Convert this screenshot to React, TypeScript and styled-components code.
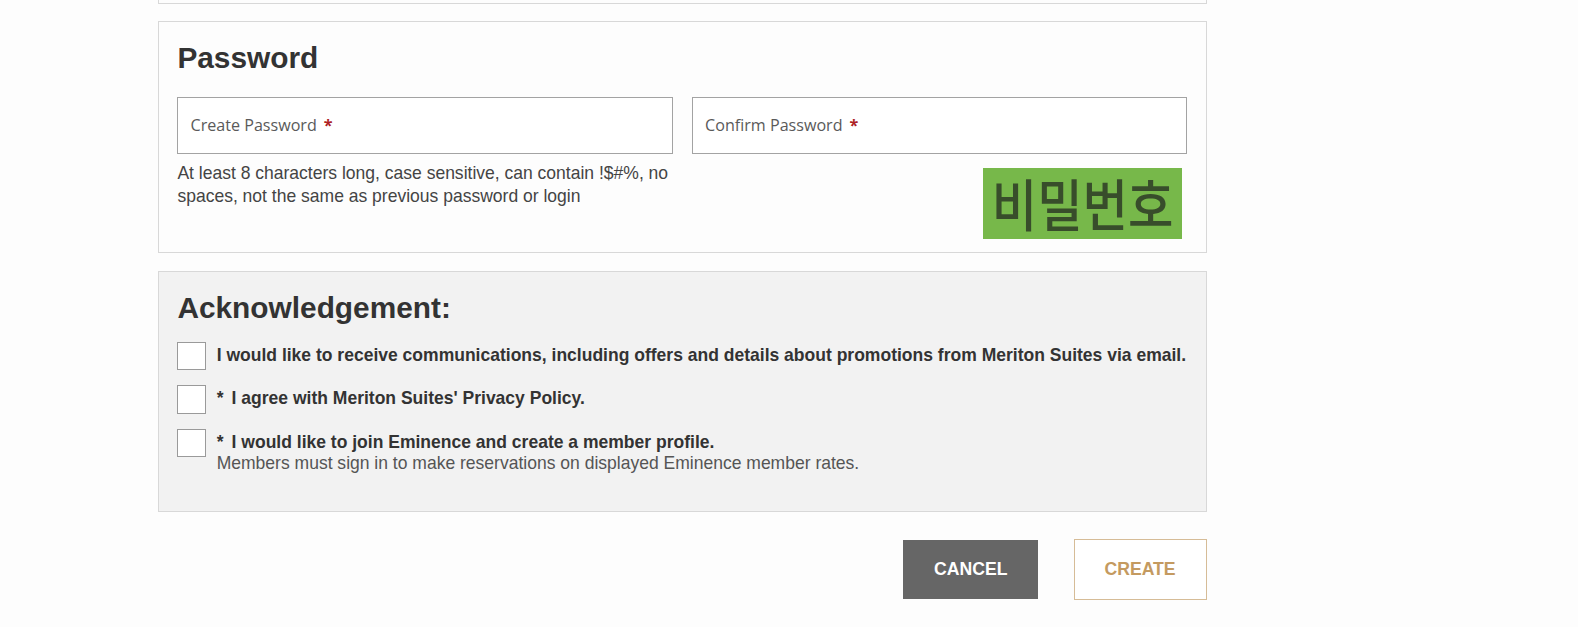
import React from "react"
import styled, { createGlobalStyle } from "styled-components"

const GlobalStyle = createGlobalStyle`
  html, body {
    margin: 0;
    padding: 0;
    background: #fdfdfd;
    font-family: "Liberation Sans", Arial, sans-serif;
    color: #333;
  }
`

const Page = styled.div`
  zoom: 1.008;
  width: 1040px;
  margin-left: 157px;
  display: flex;
  flex-direction: column;
  gap: 17.5px;
  font-size: 17.4px;
`

const Card = styled.section<{ $muted?: boolean }>`
  box-sizing: border-box;
  border: 1px solid #d8d8d8;
  background: ${(p) => (p.$muted ? "#f2f2f2" : "#fdfdfd")};
  padding: 18px 18px 0 18px;
`

const PrevCardEdge = styled.div`
  height: 3.5px;
  border: 1px solid #d8d8d8;
  border-top: none;
  box-sizing: border-box;
`

const Heading = styled.h2`
  margin: 0;
  font-size: 29.6px;
  font-weight: bold;
  color: #333;
  line-height: 36px;
`

const FieldGrid = styled.div`
  display: grid;
  grid-template-columns: 1fr 1fr;
  column-gap: 19px;
  margin-top: 20px;
  padding-bottom: 13px;
`

const Column = styled.div`
  display: flex;
  flex-direction: column;
`

const Field = styled.div`
  box-sizing: border-box;
  height: 57px;
  border: 1px solid #a3a3a3;
  background: #fff;
  display: flex;
  align-items: center;
  padding: 0 12px;
  font-family: "Open Sans", sans-serif;
  font-size: 16px;
  color: #5a5a5a;
`

const Required = styled.span`
  color: #ad1f26;
  font-weight: bold;
  margin-left: 7px;
`

const Hint = styled.p`
  margin: 8px 0 0 0;
  line-height: 23px;
  color: #444;
`

const KoreanBadge = styled.div`
  align-self: flex-end;
  margin: 14px 5px 0 0;
  width: 198px;
  height: 70px;
  background: #77b84a;
  display: flex;
  align-items: center;
  justify-content: center;
`

const KoreanText = styled.span`
  display: inline-block;
  color: #384d2b;
  font-family: "Noto Sans CJK KR", sans-serif;
  font-weight: 500;
  font-size: 49px;
  line-height: 70px;
  letter-spacing: 0;
  white-space: nowrap;
  transform: scaleY(1.12);
`

const CheckList = styled.div`
  display: flex;
  flex-direction: column;
  gap: 15px;
  margin-top: 16px;
  padding-bottom: 37px;
`

const CheckRow = styled.label`
  display: flex;
  align-items: flex-start;
  gap: 11px;
`

const Box = styled.span`
  flex: none;
  box-sizing: border-box;
  width: 28px;
  height: 28px;
  border: 1px solid #9a9a9a;
  background: #fff;
`

const CheckText = styled.div`
  padding-top: 3px;
  line-height: 21px;
`

const Strong = styled.div`
  font-weight: bold;
  color: #333;
  white-space: nowrap;
`

const Star = styled.span`
  margin-right: 8px;
`

const Sub = styled.div`
  color: #555;
`

const Actions = styled.div`
  display: flex;
  justify-content: flex-end;
  gap: 35px;
  margin-top: 9px;
`

const Button = styled.button<{ $primary?: boolean }>`
  box-sizing: border-box;
  height: ${(p) => (p.$primary ? "60px" : "58px")};
  width: ${(p) => (p.$primary ? "132px" : "134px")};
  margin-top: ${(p) => (p.$primary ? "0" : "1px")};
  border: 1px solid ${(p) => (p.$primary ? "#d6bc97" : "#666")};
  background: ${(p) => (p.$primary ? "#fff" : "#666")};
  color: ${(p) => (p.$primary ? "#c49a60" : "#fff")};
  font-family: "Liberation Sans", Arial, sans-serif;
  font-weight: bold;
  font-size: 17.5px;
  text-transform: uppercase;
  cursor: pointer;
`

export default function App() {
  return (
    <>
      <GlobalStyle />
      <Page>
        <PrevCardEdge />
        <Card>
          <Heading>Password</Heading>
          <FieldGrid>
            <Column>
              <Field>
                Create Password<Required>*</Required>
              </Field>
              <Hint>
                At least 8 characters long, case sensitive, can contain !$#%, no spaces, not the same as previous
                password or login
              </Hint>
            </Column>
            <Column>
              <Field>
                Confirm Password<Required>*</Required>
              </Field>
              <KoreanBadge>
                <KoreanText>비밀번호</KoreanText>
              </KoreanBadge>
            </Column>
          </FieldGrid>
        </Card>
        <Card $muted>
          <Heading>Acknowledgement:</Heading>
          <CheckList>
            <CheckRow>
              <Box />
              <CheckText>
                <Strong>
                  I would like to receive communications, including offers and details about promotions from Meriton
                  Suites via email.
                </Strong>
              </CheckText>
            </CheckRow>
            <CheckRow>
              <Box />
              <CheckText>
                <Strong>
                  <Star>*</Star>I agree with Meriton Suites' Privacy Policy.
                </Strong>
              </CheckText>
            </CheckRow>
            <CheckRow>
              <Box />
              <CheckText>
                <Strong>
                  <Star>*</Star>I would like to join Eminence and create a member profile.
                </Strong>
                <Sub>Members must sign in to make reservations on displayed Eminence member rates.</Sub>
              </CheckText>
            </CheckRow>
          </CheckList>
        </Card>
        <Actions>
          <Button>Cancel</Button>
          <Button $primary>Create</Button>
        </Actions>
      </Page>
    </>
  )
}
